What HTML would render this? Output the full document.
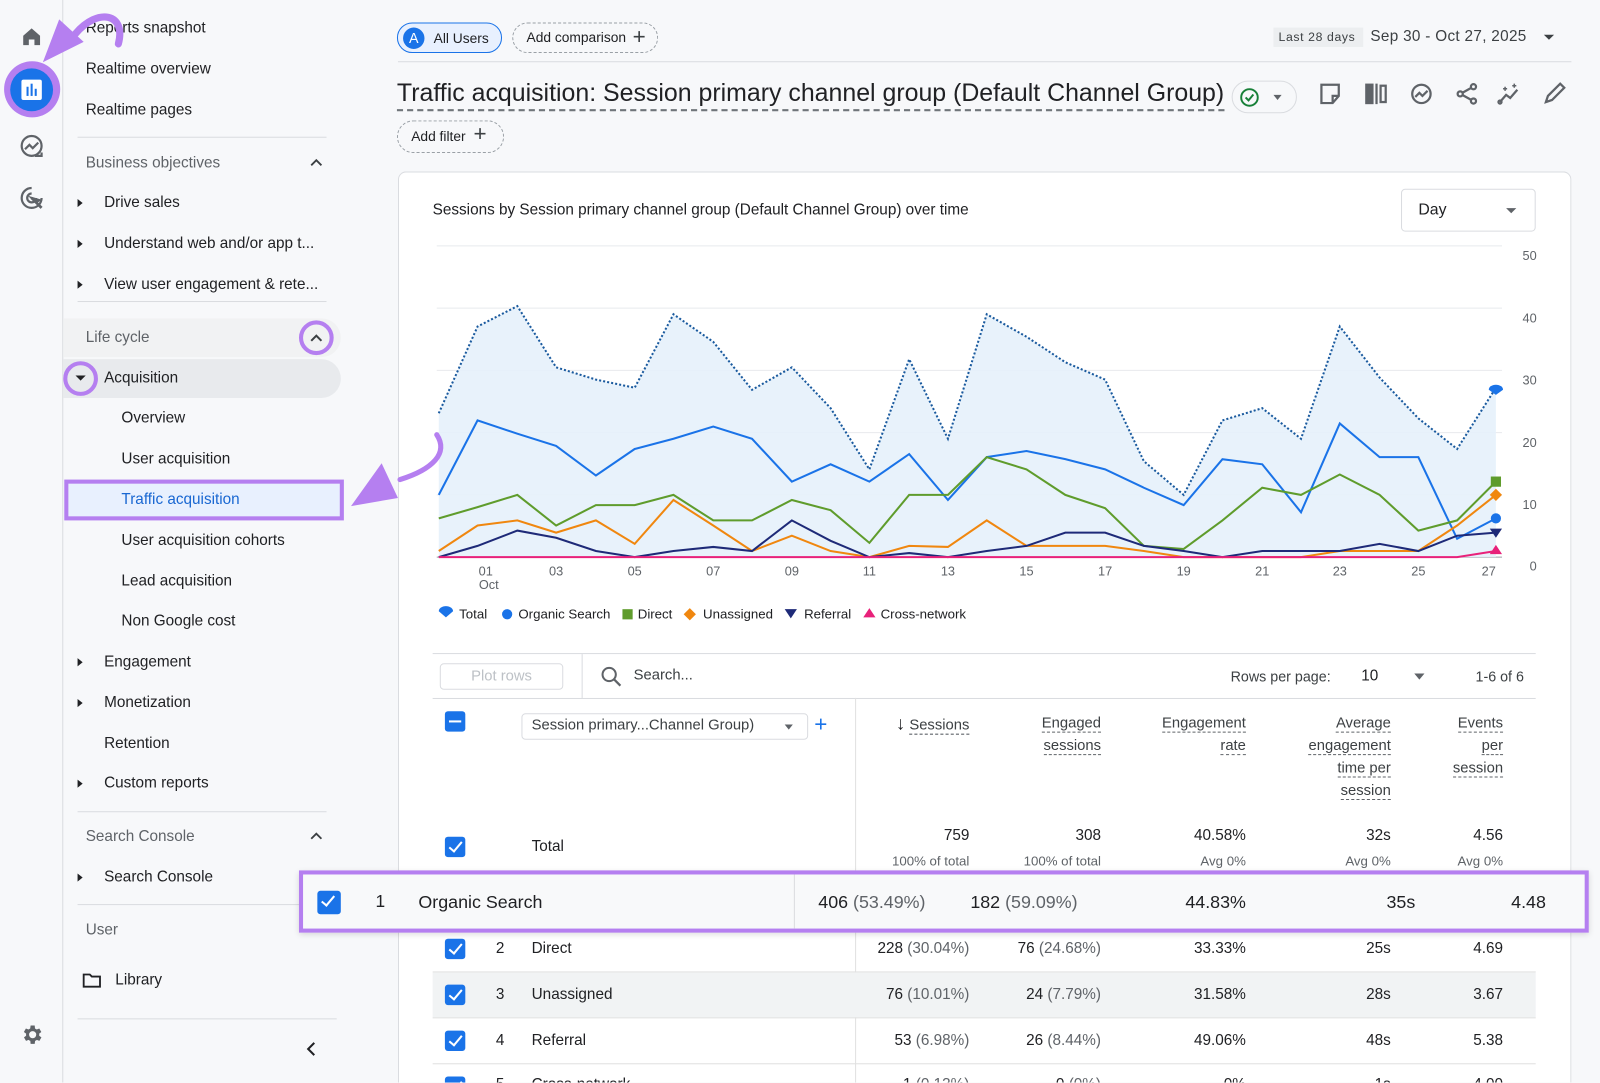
<!DOCTYPE html>
<html><head><meta charset="utf-8"><style>
*{box-sizing:border-box;margin:0;padding:0}
html,body{width:1600px;height:1083px;overflow:hidden}
body{background:#f7f8fa;font-family:"Liberation Sans",Arial,sans-serif;color:#202124}
#w{position:absolute;left:0;top:0;width:1568px;height:1061px;transform:scale(1.0204);transform-origin:0 0;overflow:hidden}
.a{position:absolute;white-space:nowrap}
.nav{font-size:15px;color:#202124}
.g{color:#5f6368}
.hr{position:absolute;height:1px;background:#dadce0}
.tri{position:absolute;width:0;height:0;border-top:4px solid transparent;border-bottom:4px solid transparent;border-left:5px solid #202124}
.cb{position:absolute;width:20px;height:20px;background:#1a73e8;border-radius:3px}
.cb:after{content:"";position:absolute;left:7px;top:2px;width:5px;height:11px;border:solid #fff;border-width:0 2px 2px 0;transform:rotate(40deg)}
.r{position:absolute;text-align:right;white-space:nowrap;font-size:15px}
.hd{position:absolute;text-align:right;font-size:14.5px;line-height:22px;color:#3c4043}
.hd span{border-bottom:1px dashed #5f6368}
.s{color:#5f6368}
</style></head><body><div id="w">
<!-- rail -->
<div class="a" style="left:61px;top:0;width:1px;height:1061px;background:#dadce0"></div>
<svg class="a" style="left:20px;top:25px" width="22" height="22" viewBox="0 0 24 24"><path d="M3 11L12 3l9 8v10h-6v-6H9v6H3z" fill="#5f6368"/></svg>
<div class="a" style="left:4px;top:60px;width:55px;height:55px;border-radius:50%;background:#b57ff0"></div>
<div class="a" style="left:10px;top:67px;width:42px;height:42px;border-radius:50%;background:#1a73e8"></div>
<div class="a" style="left:21px;top:78px;width:20px;height:20px;background:#fff;border-radius:2px"></div>
<div class="a" style="left:26px;top:85px;width:2px;height:9px;background:#1a73e8"></div>
<div class="a" style="left:30px;top:82px;width:2px;height:12px;background:#1a73e8"></div>
<div class="a" style="left:34px;top:87px;width:2px;height:7px;background:#1a73e8"></div>
<svg class="a" style="left:18px;top:130px" width="26" height="26" viewBox="0 0 24 24" fill="none" stroke="#5f6368" stroke-width="2"><circle cx="12" cy="12" r="9"/><path d="M6 15l4-4 3 3 5-5"/><path d="M15 21h6v-3"/></svg>
<svg class="a" style="left:18px;top:181px" width="26" height="26" viewBox="0 0 24 24" fill="none" stroke="#5f6368" stroke-width="2"><path d="M12 3a9 9 0 1 0 9 9"/><path d="M12 8a4 4 0 1 0 4 4"/><path d="M12 12l9 9" stroke-width="2.5"/><path d="M12 12l7 2-3 2z" fill="#5f6368"/></svg>
<svg class="a" style="left:19px;top:1002px" width="24" height="24" viewBox="0 0 24 24"><path fill="#5f6368" d="M19.4 13a7.5 7.5 0 0 0 0-2l2.1-1.6-2-3.5-2.5 1a7 7 0 0 0-1.7-1L15 3h-4l-.4 2.9a7 7 0 0 0-1.7 1l-2.5-1-2 3.5L6.6 11a7.5 7.5 0 0 0 0 2l-2.1 1.6 2 3.5 2.5-1a7 7 0 0 0 1.7 1L11 21h4l.4-2.9a7 7 0 0 0 1.7-1l2.5 1 2-3.5zM13 15.5a3.5 3.5 0 1 1 0-7 3.5 3.5 0 0 1 0 7z"/></svg>
<!-- nav -->
<div class="a nav" style="left:84px;top:19px">Reports snapshot</div>
<div class="a nav" style="left:84px;top:59px">Realtime overview</div>
<div class="a nav" style="left:84px;top:99px">Realtime pages</div>
<div class="hr" style="left:76px;top:134px;width:244px"></div>
<div class="a nav g" style="left:84px;top:151px">Business objectives</div>
<svg class="a" style="left:302px;top:153px" width="16" height="12" viewBox="0 0 16 12"><path d="M3 9l5-5 5 5" fill="none" stroke="#3c4043" stroke-width="1.8"/></svg>
<div class="tri" style="left:76px;top:195px"></div><div class="a nav" style="left:102px;top:190px">Drive sales</div>
<div class="tri" style="left:76px;top:235px"></div><div class="a nav" style="left:102px;top:230px">Understand web and/or app t...</div>
<div class="tri" style="left:76px;top:275px"></div><div class="a nav" style="left:102px;top:270px">View user engagement &amp; rete...</div>
<div class="hr" style="left:76px;top:295px;width:244px"></div>
<div class="a" style="left:62px;top:312px;width:272px;height:38px;background:#f1f2f3;border-radius:0 19px 19px 0"></div>
<div class="a nav g" style="left:84px;top:322px">Life cycle</div>
<div class="a" style="left:293px;top:314px;width:34px;height:34px;border-radius:50%;border:4px solid #b57ff0"></div>
<svg class="a" style="left:302px;top:325px" width="16" height="12" viewBox="0 0 16 12"><path d="M3 9l5-5 5 5" fill="none" stroke="#3c4043" stroke-width="2"/></svg>
<div class="a" style="left:62px;top:352px;width:272px;height:38px;background:#e8eaed;border-radius:0 19px 19px 0"></div>
<div class="a" style="left:62px;top:354px;width:34px;height:34px;border-radius:50%;border:4px solid #b57ff0"></div>
<div class="a" style="left:74px;top:368px;border-left:5px solid transparent;border-right:5px solid transparent;border-top:5px solid #202124"></div>
<div class="a nav" style="left:102px;top:362px">Acquisition</div>
<div class="a nav" style="left:119px;top:401px">Overview</div>
<div class="a nav" style="left:119px;top:441px">User acquisition</div>
<div class="a" style="left:63px;top:470px;width:274px;height:40px;background:#e8f0fe;border:4px solid #b57ff0"></div>
<div class="a nav" style="left:119px;top:481px;color:#1967d2">Traffic acquisition</div>
<div class="a nav" style="left:119px;top:521px">User acquisition cohorts</div>
<div class="a nav" style="left:119px;top:561px">Lead acquisition</div>
<div class="a nav" style="left:119px;top:600px">Non Google cost</div>
<div class="tri" style="left:76px;top:645px"></div><div class="a nav" style="left:102px;top:640px">Engagement</div>
<div class="tri" style="left:76px;top:685px"></div><div class="a nav" style="left:102px;top:680px">Monetization</div>
<div class="a nav" style="left:102px;top:720px">Retention</div>
<div class="tri" style="left:76px;top:764px"></div><div class="a nav" style="left:102px;top:759px">Custom reports</div>
<div class="hr" style="left:76px;top:795px;width:244px"></div>
<div class="a nav g" style="left:84px;top:811px">Search Console</div>
<svg class="a" style="left:302px;top:813px" width="16" height="12" viewBox="0 0 16 12"><path d="M3 9l5-5 5 5" fill="none" stroke="#3c4043" stroke-width="1.8"/></svg>
<div class="tri" style="left:76px;top:856px"></div><div class="a nav" style="left:102px;top:851px">Search Console</div>
<div class="hr" style="left:76px;top:886px;width:244px"></div>
<div class="a nav g" style="left:84px;top:903px">User</div>
<svg class="a" style="left:80px;top:953px" width="20" height="16" viewBox="0 0 20 16"><path d="M2 2h6l2 2h8v10H2z" fill="none" stroke="#202124" stroke-width="1.8"/></svg>
<div class="a nav" style="left:113px;top:952px">Library</div>
<div class="hr" style="left:76px;top:998px;width:254px"></div>
<svg class="a" style="left:298px;top:1019px" width="14" height="18" viewBox="0 0 14 18"><path d="M10 3L4 9l6 6" fill="none" stroke="#202124" stroke-width="2"/></svg>
<!-- top bar -->
<div class="a" style="left:389px;top:22px;width:103px;height:30px;border:1.5px solid #1a73e8;background:#e8f0fe;border-radius:15px"></div>
<div class="a" style="left:395px;top:27px;width:21px;height:21px;border-radius:50%;background:#1a73e8;color:#fff;font-size:14px;text-align:center;line-height:21px">A</div>
<div class="a" style="left:425px;top:30px;font-size:13.5px">All Users</div>
<div class="a" style="left:502px;top:22px;width:143px;height:30px;border:1.5px dashed #9aa0a6;border-radius:15px"></div>
<div class="a" style="left:516px;top:29px;font-size:13.5px">Add comparison</div>
<div class="a" style="left:620px;top:23px;font-size:22px;color:#3c4043;font-weight:300">+</div>
<div class="a" style="left:1248px;top:27px;width:88px;height:19px;background:#eceef0"></div>
<div class="a" style="left:1253px;top:29px;font-size:12px;letter-spacing:.6px;color:#3c4043">Last 28 days</div>
<div class="a" style="left:1343px;top:27px;font-size:15px;color:#3c4043;letter-spacing:.3px">Sep 30 - Oct 27, 2025</div>
<div class="a" style="left:1513px;top:34px;border-left:5px solid transparent;border-right:5px solid transparent;border-top:5px solid #3c4043"></div>
<div class="hr" style="left:390px;top:60px;width:1150px"></div>
<div class="a" style="left:389px;top:77px;font-size:24.4px;color:#202124;border-bottom:2px dashed #70757a;line-height:30px">Traffic acquisition: Session primary channel group (Default Channel Group)</div>
<div class="a" style="left:1207px;top:79px;width:64px;height:32px;border:1px solid #dadce0;border-radius:16px"></div>
<svg class="a" style="left:1214px;top:85px" width="21" height="21" viewBox="0 0 22 22"><circle cx="11" cy="11" r="8.5" fill="none" stroke="#188038" stroke-width="2"/><path d="M7 11l3 3 5-6" fill="none" stroke="#188038" stroke-width="2"/></svg>
<div class="a" style="left:1248px;top:93px;border-left:4.5px solid transparent;border-right:4.5px solid transparent;border-top:5px solid #5f6368"></div>
<svg class="a" style="left:1292px;top:80px" width="250" height="24" viewBox="0 0 250 24" fill="none" stroke="#5f6368" stroke-width="2.2">
<path d="M3 3h17v11l-6 7H3z M14 21v-7h6"/>
<rect x="47" y="3" width="6" height="18" fill="#5f6368"/><line x1="57" y1="2" x2="57" y2="22"/><rect x="61" y="4" width="5" height="16"/>
<circle cx="101" cy="12" r="9"/><path d="M95 15l4-4 3 3 5-5"/>
<circle cx="152" cy="5" r="2.5"/><circle cx="139" cy="12" r="2.5"/><circle cx="152" cy="19" r="2.5"/><path d="M141 11l9-5M141 13l9 5"/>
<path d="M178 20l6-7 4 3 7-8" /><circle cx="178" cy="20" r="1.5"/><path d="M183 5v4M181 7h4M192 2v4M190 4h4" stroke-width="1.5"/>
<path d="M223 20l2-6 12-12 4 4-12 12z"/>
</svg>
<div class="a" style="left:389px;top:118px;width:105px;height:32px;border:1.5px dashed #9aa0a6;border-radius:16px"></div>
<div class="a" style="left:403px;top:126px;font-size:13.5px">Add filter</div>
<div class="a" style="left:464px;top:118px;font-size:22px;color:#3c4043;font-weight:300">+</div>
<!-- card -->
<div class="a" style="left:390px;top:168px;width:1150px;height:893px;background:#fff;border:1px solid #dadce0;border-bottom:0;border-radius:8px 8px 0 0"></div>
<div class="a" style="left:424px;top:197px;font-size:15px">Sessions by Session primary channel group (Default Channel Group) over time</div>
<div class="a" style="left:1373px;top:185px;width:132px;height:42px;border:1px solid #dadce0;border-radius:4px"></div>
<div class="a" style="left:1390px;top:197px;font-size:15.5px">Day</div>
<div class="a" style="left:1476px;top:204px;border-left:5px solid transparent;border-right:5px solid transparent;border-top:5px solid #5f6368"></div>
<svg class="a" style="left:0;top:0" width="1568" height="620" viewBox="0 0 1568 620" font-family="Liberation Sans, Arial, sans-serif">
<g stroke="#e8eaed" stroke-width="1"><line x1="428" y1="241" x2="1472" y2="241"/><line x1="428" y1="302" x2="1472" y2="302"/><line x1="428" y1="363" x2="1472" y2="363"/><line x1="428" y1="424" x2="1472" y2="424"/><line x1="428" y1="485" x2="1472" y2="485"/></g>
<line x1="428" y1="546" x2="1472" y2="546" stroke="#9aa0a6"/>
<g font-size="12.5" fill="#5f6368" text-anchor="end"><text x="1506" y="255">50</text><text x="1506" y="316">40</text><text x="1506" y="377">30</text><text x="1506" y="438">20</text><text x="1506" y="499">10</text><text x="1506" y="559">0</text></g>
<g font-size="12.5" fill="#5f6368" text-anchor="middle"><text x="476" y="564">01</text><text x="479" y="577">Oct</text><text x="545" y="564">03</text><text x="622" y="564">05</text><text x="699" y="564">07</text><text x="776" y="564">09</text><text x="852" y="564">11</text><text x="929" y="564">13</text><text x="1006" y="564">15</text><text x="1083" y="564">17</text><text x="1160" y="564">19</text><text x="1237" y="564">21</text><text x="1313" y="564">23</text><text x="1390" y="564">25</text><text x="1459" y="564">27</text></g>
<polygon fill="#e6f1fb" opacity="0.9" points="430,546 430,405 468,320 507,300 545,360 584,372 622,380 660,308 699,335 737,382 776,360 814,400 852,460 891,352 929,430 967,308 1006,330 1044,355 1083,372 1121,452 1160,485 1198,412 1237,400 1275,430 1313,320 1352,370 1390,410 1428,440 1466,380 1466,546"/>
<polyline fill="none" stroke="#1a5a9e" stroke-width="2" stroke-dasharray="2,2" points="430,405 468,320 507,300 545,360 584,372 622,380 660,308 699,335 737,382 776,360 814,400 852,460 891,352 929,430 967,308 1006,330 1044,355 1083,372 1121,452 1160,485 1198,412 1237,400 1275,430 1313,320 1352,370 1390,410 1428,440 1466,380"/>
<polyline fill="none" stroke="#1a73e8" stroke-width="2" points="430,485 468,412 507,425 545,437 584,466 622,440 660,430 699,418 737,430 776,472 814,455 852,472 891,445 929,490 967,448 1006,442 1044,450 1083,460 1121,478 1160,495 1198,450 1237,455 1275,502 1313,415 1352,448 1390,448 1428,528 1466,508"/>
<polyline fill="none" stroke="#5f9c2c" stroke-width="2" points="430,508 468,497 507,485 545,515 584,495 622,495 660,485 699,510 737,510 776,490 814,500 852,532 891,485 929,485 967,448 1006,460 1044,485 1083,498 1121,535 1160,538 1198,510 1237,478 1275,485 1313,465 1352,485 1390,520 1428,510 1466,472"/>
<polyline fill="none" stroke="#f0870f" stroke-width="2" points="430,540 468,515 507,510 545,522 584,510 622,533 660,490 699,515 737,540 776,525 814,540 852,546 891,535 929,536 967,510 1006,535 1044,535 1083,535 1121,540 1160,546 1198,546 1237,546 1275,546 1313,540 1352,540 1390,540 1428,515 1466,485"/>
<polyline fill="none" stroke="#1e2a78" stroke-width="2" points="430,546 468,535 507,520 545,527 584,540 622,546 660,540 699,536 737,540 776,510 814,530 852,546 891,542 929,546 967,540 1006,535 1044,522 1083,522 1121,535 1160,540 1198,546 1237,540 1275,540 1313,540 1352,533 1390,540 1428,525 1466,522"/>
<polyline fill="none" stroke="#e8217a" stroke-width="2" points="430,546 1428,546 1466,540"/>
<path d="M1459 382a7 5 0 0 1 14 0l-7 5z" fill="#1a73e8"/>
<rect x="1461" y="467" width="10" height="10" fill="#5f9c2c"/>
<path d="M1466 479l6 6-6 6-6-6z" fill="#f0870f"/>
<circle cx="1466" cy="508" r="5" fill="#1a73e8"/>
<path d="M1460 518h12l-6 9z" fill="#1e2a78"/>
<path d="M1466 534l6 9h-12z" fill="#e8217a"/>
<g font-size="13" fill="#202124"><path d="M430 599a7 5 0 0 1 14 0l-7 6z" fill="#1a73e8"/><text x="450" y="606">Total</text>
<circle cx="497" cy="602" r="5" fill="#1a73e8"/><text x="508" y="606">Organic Search</text>
<rect x="610" y="597" width="10" height="10" fill="#5f9c2c"/><text x="625" y="606">Direct</text>
<path d="M676 596l6 6-6 6-6-6z" fill="#f0870f"/><text x="689" y="606">Unassigned</text>
<path d="M769 597h12l-6 9z" fill="#1e2a78"/><text x="788" y="606">Referral</text>
<path d="M852 596l6 9h-12z" fill="#e8217a"/><text x="863" y="606">Cross-network</text></g>
</svg>
<!-- table -->
<div class="hr" style="left:424px;top:640px;width:1081px"></div>
<div class="a" style="left:431px;top:650px;width:121px;height:26px;border:1px solid #dadce0;border-radius:4px;color:#bdc1c6;font-size:14.5px;text-align:center;line-height:24px">Plot rows</div>
<div class="a" style="left:570px;top:641px;width:1px;height:43px;background:#dadce0"></div>
<svg class="a" style="left:588px;top:652px" width="22" height="22" viewBox="0 0 22 22"><circle cx="9" cy="9" r="6.5" fill="none" stroke="#5f6368" stroke-width="2"/><path d="M14 14l6 6" stroke="#5f6368" stroke-width="2.2"/></svg>
<div class="a" style="left:621px;top:654px;font-size:14.5px;color:#3c4043">Search...</div>
<div class="a" style="left:1206px;top:655px;font-size:14px;color:#3c4043">Rows per page:</div>
<div class="a" style="left:1334px;top:654px;font-size:15px">10</div>
<div class="a" style="left:1386px;top:660px;border-left:5px solid transparent;border-right:5px solid transparent;border-top:6px solid #5f6368"></div>
<div class="a" style="left:1446px;top:655px;font-size:14px;color:#3c4043">1-6 of 6</div>
<div class="hr" style="left:424px;top:684px;width:1081px"></div>
<div class="a" style="left:838px;top:684px;width:1px;height:377px;background:#e0e0e0"></div>
<div class="a" style="left:436px;top:697px;width:20px;height:20px;background:#1a73e8;border-radius:3px"></div>
<div class="a" style="left:440px;top:706px;width:12px;height:2px;background:#fff"></div>
<div class="a" style="left:511px;top:699px;width:281px;height:26px;border:1px solid #dadce0;border-radius:4px"></div>
<div class="a" style="left:521px;top:703px;font-size:14.5px;color:#3c4043">Session primary...Channel Group)</div>
<div class="a" style="left:769px;top:710px;border-left:4px solid transparent;border-right:4px solid transparent;border-top:5px solid #5f6368"></div>
<div class="a" style="left:798px;top:697px;font-size:22px;color:#1a73e8">+</div>
<div class="hd" style="left:860px;top:698px;width:90px"><span style="border:0;font-size:18px;color:#202124">&#8595;</span> <span>Sessions</span></div>
<div class="hd" style="left:990px;top:698px;width:89px"><span>Engaged</span><br><span>sessions</span></div>
<div class="hd" style="left:1120px;top:698px;width:101px"><span>Engagement</span><br><span>rate</span></div>
<div class="hd" style="left:1250px;top:698px;width:113px"><span>Average</span><br><span>engagement</span><br><span>time per</span><br><span>session</span></div>
<div class="hd" style="left:1400px;top:698px;width:73px"><span>Events</span><br><span>per</span><br><span>session</span></div>
<div class="cb" style="left:436px;top:820px"></div>
<div class="a" style="left:521px;top:821px;font-size:15px">Total</div>
<div class="r" style="right:618px;top:810px">759</div><div class="r s" style="right:618px;top:836px;font-size:13px">100% of total</div>
<div class="r" style="right:489px;top:810px">308</div><div class="r s" style="right:489px;top:836px;font-size:13px">100% of total</div>
<div class="r" style="right:347px;top:810px">40.58%</div><div class="r s" style="right:347px;top:836px;font-size:13px">Avg 0%</div>
<div class="r" style="right:205px;top:810px">32s</div><div class="r s" style="right:205px;top:836px;font-size:13px">Avg 0%</div>
<div class="r" style="right:95px;top:810px">4.56</div><div class="r s" style="right:95px;top:836px;font-size:13px">Avg 0%</div>
<!-- rows -->
<div class="hr" style="left:424px;top:952px;width:1081px;background:#e0e0e0"></div>
<div class="a" style="left:424px;top:953px;width:1081px;height:44px;background:#f1f3f4"></div>
<div class="hr" style="left:424px;top:997px;width:1081px;background:#e0e0e0"></div>
<div class="hr" style="left:424px;top:1042px;width:1081px;background:#e0e0e0"></div>
<div class="cb" style="left:436px;top:920px"></div><div class="a" style="left:486px;top:921px;font-size:15px">2</div><div class="a" style="left:521px;top:921px;font-size:15px">Direct</div>
<div class="r" style="right:618px;top:921px">228 <span class="s">(30.04%)</span></div><div class="r" style="right:489px;top:921px">76 <span class="s">(24.68%)</span></div><div class="r" style="right:347px;top:921px">33.33%</div><div class="r" style="right:205px;top:921px">25s</div><div class="r" style="right:95px;top:921px">4.69</div>
<div class="cb" style="left:436px;top:965px"></div><div class="a" style="left:486px;top:966px;font-size:15px">3</div><div class="a" style="left:521px;top:966px;font-size:15px">Unassigned</div>
<div class="r" style="right:618px;top:966px">76 <span class="s">(10.01%)</span></div><div class="r" style="right:489px;top:966px">24 <span class="s">(7.79%)</span></div><div class="r" style="right:347px;top:966px">31.58%</div><div class="r" style="right:205px;top:966px">28s</div><div class="r" style="right:95px;top:966px">3.67</div>
<div class="cb" style="left:436px;top:1010px"></div><div class="a" style="left:486px;top:1011px;font-size:15px">4</div><div class="a" style="left:521px;top:1011px;font-size:15px">Referral</div>
<div class="r" style="right:618px;top:1011px">53 <span class="s">(6.98%)</span></div><div class="r" style="right:489px;top:1011px">26 <span class="s">(8.44%)</span></div><div class="r" style="right:347px;top:1011px">49.06%</div><div class="r" style="right:205px;top:1011px">48s</div><div class="r" style="right:95px;top:1011px">5.38</div>
<div class="a" style="left:0;top:1043px;width:1568px;height:18px;overflow:hidden">
<div class="cb" style="left:436px;top:12px"></div><div class="a" style="left:486px;top:11px;font-size:15px">5</div><div class="a" style="left:521px;top:11px;font-size:15px">Cross-network</div>
<div class="r" style="right:618px;top:11px">1 <span class="s">(0.13%)</span></div><div class="r" style="right:489px;top:11px">0 <span class="s">(0%)</span></div><div class="r" style="right:347px;top:11px">0%</div><div class="r" style="right:205px;top:11px">1s</div><div class="r" style="right:95px;top:11px">4.00</div>
</div>
<!-- highlighted row -->
<div class="a" style="left:293px;top:853px;width:1264px;height:61px;background:#f8f9fa;border:4px solid #b57ff0;box-shadow:0 2px 6px rgba(0,0,0,.15)"></div>
<div class="a" style="left:778px;top:857px;width:1px;height:53px;background:#dadce0"></div>
<div class="cb" style="left:311px;top:873px;width:23px;height:23px"></div>
<div class="a" style="left:368px;top:874px;font-size:17px">1</div>
<div class="a" style="left:410px;top:874px;font-size:17.5px">Organic Search</div>
<div class="r" style="right:661px;top:874px;font-size:17.5px">406 <span class="s">(53.49%)</span></div>
<div class="r" style="right:512px;top:874px;font-size:17.5px">182 <span class="s">(59.09%)</span></div>
<div class="r" style="right:347px;top:874px;font-size:17.5px">44.83%</div>
<div class="r" style="right:181px;top:874px;font-size:17.5px">35s</div>
<div class="r" style="right:53px;top:874px;font-size:17.5px">4.48</div>
<!-- arrows -->
<svg class="a" style="left:30px;top:5px" width="100" height="80" viewBox="0 0 100 80"><path d="M86 38C94 8 66 2 44 28" fill="none" stroke="#b57ff0" stroke-width="7" stroke-linecap="round"/><path d="M12 56L28 14L52 36z" fill="#b57ff0"/></svg>
<svg class="a" style="left:340px;top:420px" width="100" height="85" viewBox="0 0 100 85"><path d="M88 6C100 24 84 40 52 50" fill="none" stroke="#b57ff0" stroke-width="5" stroke-linecap="round"/><path d="M4 76L34 34L50 68z" fill="#b57ff0"/></svg>
</div></body></html>
